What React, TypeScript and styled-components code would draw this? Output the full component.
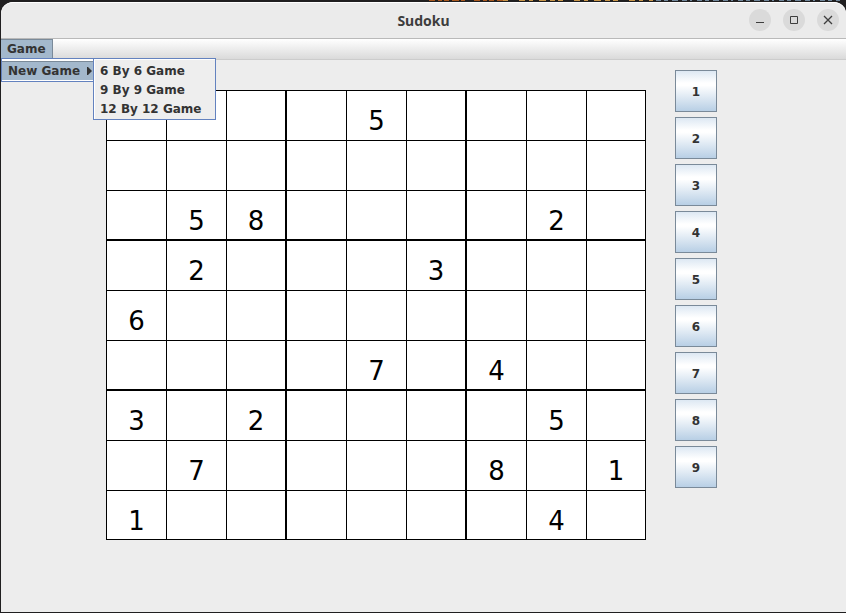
import React from "react";
import styled, { createGlobalStyle, css } from "styled-components";

const GlobalStyle = createGlobalStyle`
  *, *::before, *::after { box-sizing: border-box; }
  body { margin: 0; background: #201f20; }
`;

const Desktop = styled.div`
  position: relative;
  display: flex;
  min-height: 100vh;
  padding: 2px 0 1px 1px;
  background: #201f20;
`;

const EditorEdge = styled.svg`
  position: absolute;
  top: 0;
  right: 0;
  display: block;
`;

const Window = styled.main`
  position: relative;
  flex: 1;
  min-width: 0;
  border-radius: 12px 12px 0 0;
  background: #ededed;
  font: bold 12px "DejaVu Sans", sans-serif;
  color: #333333;
`;

const TitleBar = styled.header`
  display: grid;
  grid-template-columns: 1fr auto 1fr;
  align-items: center;
  height: 37px;
  padding: 0 7px;
  border-top: 1px solid #ffffff;
  border-bottom: 1px solid #b9b9b9;
  border-radius: 12px 12px 0 0;
  background: #ebebeb;
`;

const Title = styled.h1`
  grid-column: 2;
  margin: 0;
  font: bold 14px/20px "Noto Sans", sans-serif;
  color: #3d3d3d;
`;

const WindowControls = styled.div`
  display: flex;
  justify-content: flex-end;
  gap: 12px;
  padding-bottom: 2px;
`;

const ControlButton = styled.button`
  display: grid;
  place-items: center;
  width: 22px;
  height: 22px;
  padding: 0;
  border: 0;
  border-radius: 50%;
  background: #dadada;
  svg { display: block; }
`;

const MenuBar = styled.nav`
  position: relative;
  display: flex;
  height: 21px;
  padding-bottom: 2px;
  border-bottom: 1px solid #cccccc;
  background: linear-gradient(#ffffff, #dadada);
`;

const MenuButton = styled.button`
  height: 19px;
  padding: 0 6px;
  border: 1px solid #7a8a99;
  border-width: 1px 1px 0 0;
  background: #a3b8cc;
  font: inherit;
  line-height: 16px;
  color: #333333;
`;

const popup = css`
  position: absolute;
  z-index: 1;
  border: 1px solid #6382bf;
  background: #eeeeee;
  box-shadow: inset 1px 1px #ffffff;
`;

const Popup = styled.div`
  ${popup}
  top: 19px;
  left: 0;
  width: 94px;
  padding: 2px 0 1px;
  background: #ffffff;
`;

const SubPopup = styled.div`
  ${popup}
  top: -1px;
  left: 91px;
  width: 123px;
  padding: 2px 0 1px;
`;

const MenuItem = styled.button<{ $active?: boolean }>`
  display: flex;
  align-items: center;
  justify-content: space-between;
  width: 100%;
  height: 19px;
  padding: 1px 2px 0 6px;
  border: 0;
  background: ${(p) => (p.$active ? "#a3b8cc" : "transparent")};
  box-shadow: ${(p) => (p.$active ? "inset 0 1px #7a8a99" : "none")};
  font: inherit;
  line-height: 18px;
  color: #333333;
  white-space: nowrap;
`;

const Content = styled.div`
  display: flex;
  align-items: flex-start;
  gap: 29px;
  padding: 10px 0 0 105px;
`;

const Board = styled.table`
  flex: none;
  margin-top: 20px;
  border-collapse: separate;
  border-spacing: 0;
  background: #ffffff;
`;

const Cell = styled.td<{ $boxRight: boolean; $boxBottom: boolean }>`
  width: 60px;
  height: 50px;
  padding: 15px 0 0;
  vertical-align: top;
  border: solid #000000;
  border-width: 1px ${(p) => (p.$boxRight ? "1px" : 0)} ${(p) => (p.$boxBottom ? "1px" : 0)} 1px;
  font: 26px/30px "DejaVu Sans", sans-serif;
  color: #000000;
  text-align: center;
`;

const Keypad = styled.div`
  display: flex;
  flex-direction: column;
  gap: 5px;
`;

const Key = styled.button`
  width: 42px;
  height: 42px;
  padding: 2px 0 0;
  border: 1px solid #7a8a99;
  background: linear-gradient(#dde8f3, #ffffff 30%, #ffffff 36%, #b8cfe5);
  font: inherit;
  color: #333333;
`;

const puzzle = [
  "....5....",
  ".........",
  ".58....2.",
  ".2...3...",
  "6........",
  "....7.4..",
  "3.2....5.",
  ".7....8.1",
  "1......4.",
];

const sizes = [6, 9, 12];

export default function App() {
  return (
    <>
      <GlobalStyle />
      <Desktop>
        <EditorEdge width="418" height="1" viewBox="0 0 418 1" aria-hidden="true">
          <path d="M1 .5h74" stroke="#a9591f" strokeDasharray="6 3 4 2 5 3 7 2 4 9" />
          <path d="M75 .5h150" stroke="#c8964a" strokeDasharray="5 11 6 4 4 6 7 4 5 3" />
          <path d="M228 .5h184" stroke="#71879b" strokeDasharray="5 3 4 4 6 4 5 3 2 5" />
        </EditorEdge>
        <Window>
          <TitleBar>
            <Title>Sudoku</Title>
            <WindowControls>
              <ControlButton aria-label="Minimize">
                <svg width="10" height="10" viewBox="0 0 10 10">
                  <path d="M1 7.5h8" stroke="#3d3d3d" />
                </svg>
              </ControlButton>
              <ControlButton aria-label="Maximize">
                <svg width="10" height="10" viewBox="0 0 10 10">
                  <path d="M1.5 1.5h7v7h-7z" fill="none" stroke="#3d3d3d" />
                </svg>
              </ControlButton>
              <ControlButton aria-label="Close">
                <svg width="10" height="10" viewBox="0 0 10 10">
                  <path d="M1 1l8 8M9 1l-8 8" stroke="#3d3d3d" strokeWidth="1.3" />
                </svg>
              </ControlButton>
            </WindowControls>
          </TitleBar>
          <MenuBar>
            <MenuButton aria-expanded="true">Game</MenuButton>
            <Popup role="menu">
              <MenuItem $active role="menuitem" aria-expanded="true">
                New Game
                <svg width="6" height="8" viewBox="0 0 6 8">
                  <path d="M1 0h1l4 4-4 4H1z" fill="#333333" />
                </svg>
              </MenuItem>
              <SubPopup role="menu">
                {sizes.map((n) => (
                  <MenuItem key={n} role="menuitem">{`${n} By ${n} Game`}</MenuItem>
                ))}
              </SubPopup>
            </Popup>
          </MenuBar>
          <Content>
            <Board aria-label="Sudoku board">
              <tbody>
                {puzzle.map((row, r) => (
                  <tr key={r}>
                    {[...row].map((value, c) => (
                      <Cell key={c} $boxRight={c % 3 === 2} $boxBottom={r % 3 === 2}>
                        {value === "." ? "" : value}
                      </Cell>
                    ))}
                  </tr>
                ))}
              </tbody>
            </Board>
            <Keypad>
              {[1, 2, 3, 4, 5, 6, 7, 8, 9].map((n) => (
                <Key key={n}>{n}</Key>
              ))}
            </Keypad>
          </Content>
        </Window>
      </Desktop>
    </>
  );
}
